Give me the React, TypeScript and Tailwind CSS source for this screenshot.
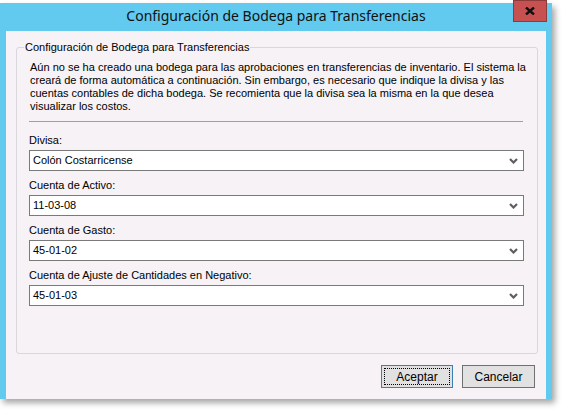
import React from "react";

const body = { fontFamily: '"Liberation Sans", Arial, sans-serif' };

function Chevron() {
  return (
    <svg width="9" height="6" viewBox="0 0 9 6" className="mr-[5px]">
      <polyline points="1,1 4.5,4.5 8,1" fill="none" stroke="#5f5f5f" strokeWidth="2.2" />
    </svg>
  );
}

function Combo({ value }: { value: string }) {
  return (
    <div className="flex h-[21px] w-[495px] items-center justify-between border border-[#7a7a7a] bg-white pl-[3px]">
      <span className="text-[11px] text-black">{value}</span>
      <Chevron />
    </div>
  );
}

function Field({ label, value }: { label: string; value: string }) {
  return (
    <div className="flex flex-col">
      <span className="h-[13px] text-[11px] leading-[13px] text-black">{label}</span>
      <div className="mt-[3px]">
        <Combo value={value} />
      </div>
    </div>
  );
}

export default function App() {
  return (
    <div className="h-[416px] w-[563px] overflow-hidden bg-white" style={body}>
      <div className="relative mt-[3px] w-[552px] bg-[#62c9ef] shadow-[3px_4px_6px_rgba(0,0,0,0.35)]">
        <div className="flex h-[28px] items-center justify-center pb-[4px]">
          <span
            className="text-[14px] text-[#111]"
            style={{ fontFamily: '"Noto Sans", "Open Sans", sans-serif' }}
          >
            Configuración de Bodega para Transferencias
          </span>
        </div>
        <div className="absolute right-[5px] top-[-3px] flex h-[22px] w-[34px] items-center justify-center border border-[#8c3a3a] bg-[#c75050]">
          <svg width="10" height="8" viewBox="0 0 10 8">
            <path d="M1 0.5 L9 7.5 M9 0.5 L1 7.5" stroke="#111" strokeWidth="2.4" />
          </svg>
        </div>
        <div className="mx-[6px] mb-[6px] h-[368px] bg-[#f6f2f6] pl-[10px] pr-[11px] pt-[10px]">
          <fieldset className="h-[313px] rounded-[3px] border border-[#d9d6dc] pl-[12px] pr-[11px]">
            <legend className="-ml-[5px] px-[1px] text-[11px] leading-[13px] text-black">
              Configuración de Bodega para Transferencias
            </legend>
            <div className="mt-[7px] whitespace-nowrap pl-[1px] text-[11px] leading-[13px] text-black">
              <div>Aún no se ha creado una bodega para las aprobaciones en transferencias de inventario. El sistema la</div>
              <div>creará de forma automática a continuación. Sin embargo, es necesario que indique la divisa y las</div>
              <div>cuentas contables de dicha bodega. Se recomienta que la divisa sea la misma en la que desea</div>
              <div>visualizar los costos.</div>
            </div>
            <div className="mt-[8px] h-px w-[494px] bg-[#a0a0a0]" />
            <div className="mt-[12px] flex flex-col gap-[8px]">
              <Field label="Divisa:" value="Colón Costarricense" />
              <Field label="Cuenta de Activo:" value="11-03-08" />
              <Field label="Cuenta de Gasto:" value="45-01-02" />
              <Field label="Cuenta de Ajuste de Cantidades en Negativo:" value="45-01-03" />
            </div>
          </fieldset>
          <div className="mt-[11px] flex justify-end gap-[9px]">
            <div className="flex h-[23px] w-[72px] items-center justify-center border border-[#3c7fb1] bg-[#e1e1e1] p-[2px]">
              <div className="flex h-full w-full items-center justify-center border border-dotted border-black text-[12px] text-black">
                Aceptar
              </div>
            </div>
            <div className="flex h-[23px] w-[73px] items-center justify-center border border-[#707070] bg-[#e1e1e1] text-[12px] text-black">
              Cancelar
            </div>
          </div>
        </div>
      </div>
    </div>
  );
}
